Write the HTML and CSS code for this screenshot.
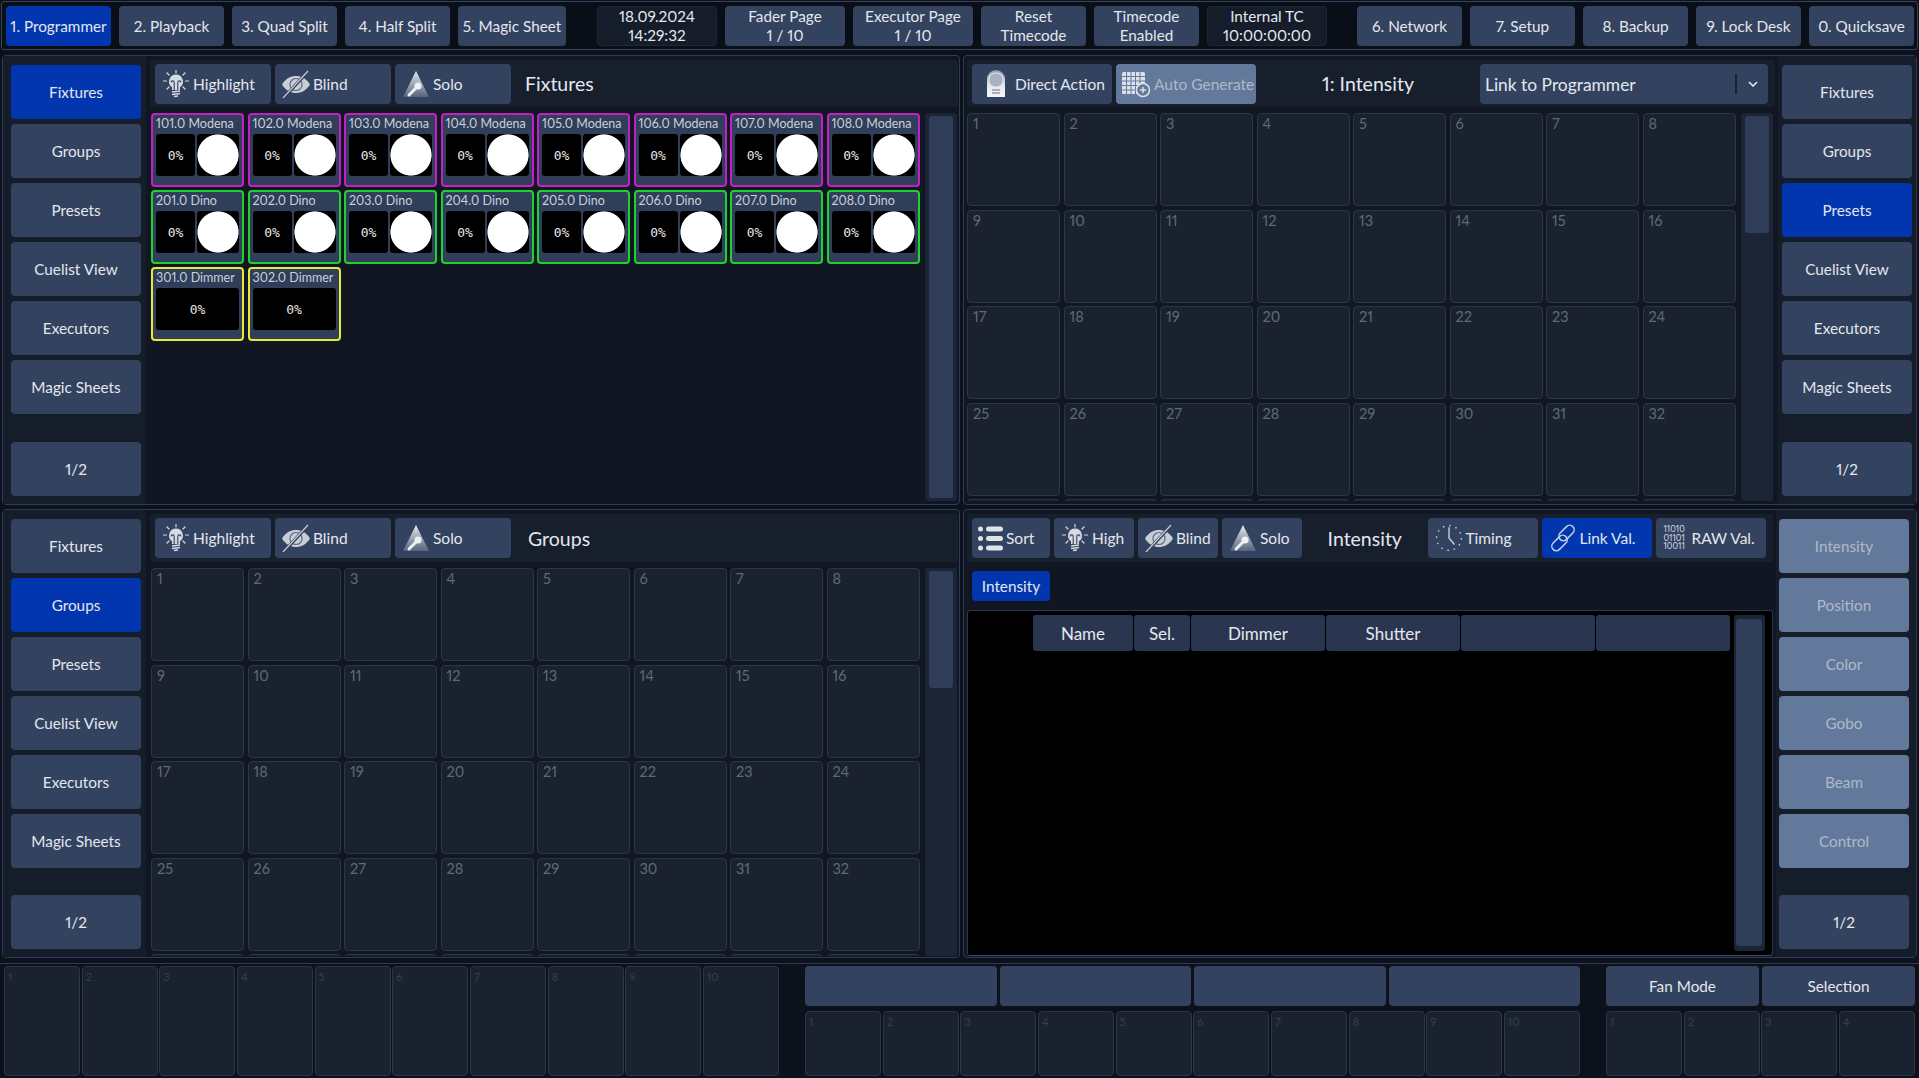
FILE: index.html
```html
<!DOCTYPE html>
<html lang="en">
  <head>
    <meta charset="UTF-8" />
    <title>Programmer</title>
    <link rel="stylesheet" href="styles.css">
  </head>
  <body>
    <svg class="defs" aria-hidden="true">
      <defs>
        <linearGradient id="fade" x1="0" y1="0" x2="0" y2="1">
          <stop offset="0" stop-color="#e8ebf0" />
          <stop offset="1" stop-color="#55637d" />
        </linearGradient>
        <linearGradient id="finger" x1="0" y1="0" x2="0" y2="1">
          <stop offset="0" stop-color="#8f9bad" />
          <stop offset="0.6" stop-color="#e6e9ee" />
          <stop offset="1" stop-color="#f4f5f7" />
        </linearGradient>
        <symbol id="i-bulb" viewBox="0 0 28 28">
          <g stroke="#d5dae3" stroke-width="1.2" stroke-linecap="round">
            <path d="M14 0.500v2.500M5 3l2 2M23 3l-2 2M1.500 11h3M26.500 11h-3M5 19l2-2M23 19l-2-2" />
          </g>
          <path d="M14 4.500a7 7 0 0 1 4 12.700V20h-8v-2.800A7 7 0 0 1 14 4.500z" fill="#d5dae3" />
          <path d="M12.200 20v-7.500a1.600 1.600 0 0 0-3.200 0M15.800 20v-7.500a1.600 1.600 0 0 1 3.200 0" fill="none" stroke="#33425f" stroke-width="1.100" />
          <path d="M10 22l8-1M10 24.500l8-1M12 26.500l4-.5" stroke="#d5dae3" stroke-width="1.400" />
        </symbol>
        <symbol id="i-eye" viewBox="0 0 28 28">
          <path d="M0 14.500C4 8 9 6 14 6s10 2 14 8.500C24 21 19 23 14 23S4 21 0 14.500z" fill="#c8cdd6" />
          <circle cx="14" cy="14.500" r="6" fill="none" stroke="#5c6a84" stroke-width="1.200" />
          <path d="M1.500 28L26.500 1" stroke="#33425f" stroke-width="3.200" />
          <path d="M1 28L26 1" stroke="#c8cdd6" stroke-width="1.200" />
        </symbol>
        <symbol id="i-solo" viewBox="0 0 28 28">
          <path d="M14 1L27 27H1z" fill="url(#fade)" />
          <circle cx="16" cy="16" r="3.500" fill="#eef0f4" />
          <path d="M14 18l-7 7" stroke="#eef0f4" stroke-width="3" stroke-linecap="round" />
        </symbol>
        <symbol id="i-finger" viewBox="0 0 28 28">
          <path d="M5 27V9a9 9 0 0 1 18 0v18z" fill="url(#finger)" />
          <rect x="7" y="3" width="14" height="14" rx="6.500" fill="#a9b2c0" stroke="#e6e9ee" />
          <path d="M10 20h8M10 23h8" stroke="#667089" stroke-width="1" />
        </symbol>
        <symbol id="i-grid" viewBox="0 0 30 28">
          <rect x="1" y="2" width="23" height="22" rx="1.500" fill="#dde1e8" />
          <path d="M1 6.500h23M1 11h23M1 15.500h23M1 20h23M5.500 2v22M10 2v22M14.500 2v22M19 2v22" stroke="#63799b" stroke-width="1" />
          <circle cx="22" cy="20" r="6.500" fill="#63799b" stroke="#dde1e8" stroke-width="1.500" />
          <path d="M19 20h6M22 17v6" stroke="#dde1e8" stroke-width="1.500" />
        </symbol>
        <symbol id="i-sort" viewBox="0 0 26 25">
          <g fill="#dfe3ea">
            <circle cx="2.500" cy="3" r="2.500" />
            <circle cx="2.500" cy="12.500" r="2.500" />
            <circle cx="2.500" cy="22" r="2.500" />
            <rect x="8" y="0.500" width="17" height="5" rx="2.500" />
            <rect x="8" y="10" width="17" height="5" rx="2.500" />
            <rect x="8" y="19.500" width="17" height="5" rx="2.500" />
          </g>
        </symbol>
        <symbol id="i-clock" viewBox="0 0 26 26">
          <circle cx="13" cy="13" r="11.500" fill="none" stroke="#c8cdd6" stroke-width="1.300" stroke-dasharray="1.500 4.500" />
          <path d="M13 3v10l5 6" fill="none" stroke="#c8cdd6" stroke-width="1.300" />
        </symbol>
        <symbol id="i-link" viewBox="0 0 28 28">
          <g fill="none" stroke="#c4d0e8" stroke-width="1.500">
            <rect x="13" y="0" width="9" height="18" rx="4.500" transform="rotate(45 17.500 9)" />
            <rect x="6" y="10" width="9" height="18" rx="4.500" transform="rotate(45 10.500 19)" />
          </g>
        </symbol>
      </defs>
    </svg>

    <div class="topbar">
      <a class="btn top active">1. Programmer</a>
      <a class="btn top">2. Playback</a>
      <a class="btn top">3. Quad Split</a>
      <a class="btn top">4. Half Split</a>
      <a class="btn top magic">5. Magic Sheet</a>
      <div class="clock date">18.09.2024<br />14:29:32</div>
      <a class="btn two w120">Fader Page<br />1 / 10</a>
      <a class="btn two w120">Executor Page<br />1 / 10</a>
      <a class="btn two">Reset<br />Timecode</a>
      <a class="btn two">Timecode<br />Enabled</a>
      <div class="clock tc">Internal TC<br />10:00:00:00</div>
      <a class="btn top">6. Network</a>
      <a class="btn top">7. Setup</a>
      <a class="btn top">8. Backup</a>
      <a class="btn top">9. Lock Desk</a>
      <a class="btn top">0. Quicksave</a>
    </div>

    <div class="row row-up">
      <section class="panel left">
        <nav class="nav">
          <a class="btn active">Fixtures</a>
          <a class="btn">Groups</a>
          <a class="btn">Presets</a>
          <a class="btn">Cuelist View</a>
          <a class="btn">Executors</a>
          <a class="btn">Magic Sheets</a>
          <a class="btn page">1/2</a>
        </nav>
        <div class="main">
          <div class="toolbar">
            <a class="btn tool w116"><svg class="icon"><use href="#i-bulb" /></svg>Highlight</a>
            <a class="btn tool w116"><svg class="icon"><use href="#i-eye" /></svg>Blind</a>
            <a class="btn tool w116"><svg class="icon"><use href="#i-solo" /></svg>Solo</a>
            <h2 class="title">Fixtures</h2>
          </div>
          <div class="view">
            <div class="tiles">
              <div class="tile pink"><span>101.0 Modena</span><div class="vals"><b>0%</b><i></i></div></div>
              <div class="tile pink"><span>102.0 Modena</span><div class="vals"><b>0%</b><i></i></div></div>
              <div class="tile pink"><span>103.0 Modena</span><div class="vals"><b>0%</b><i></i></div></div>
              <div class="tile pink"><span>104.0 Modena</span><div class="vals"><b>0%</b><i></i></div></div>
              <div class="tile pink"><span>105.0 Modena</span><div class="vals"><b>0%</b><i></i></div></div>
              <div class="tile pink"><span>106.0 Modena</span><div class="vals"><b>0%</b><i></i></div></div>
              <div class="tile pink"><span>107.0 Modena</span><div class="vals"><b>0%</b><i></i></div></div>
              <div class="tile pink"><span>108.0 Modena</span><div class="vals"><b>0%</b><i></i></div></div>
              <div class="tile green"><span>201.0 Dino</span><div class="vals"><b>0%</b><i></i></div></div>
              <div class="tile green"><span>202.0 Dino</span><div class="vals"><b>0%</b><i></i></div></div>
              <div class="tile green"><span>203.0 Dino</span><div class="vals"><b>0%</b><i></i></div></div>
              <div class="tile green"><span>204.0 Dino</span><div class="vals"><b>0%</b><i></i></div></div>
              <div class="tile green"><span>205.0 Dino</span><div class="vals"><b>0%</b><i></i></div></div>
              <div class="tile green"><span>206.0 Dino</span><div class="vals"><b>0%</b><i></i></div></div>
              <div class="tile green"><span>207.0 Dino</span><div class="vals"><b>0%</b><i></i></div></div>
              <div class="tile green"><span>208.0 Dino</span><div class="vals"><b>0%</b><i></i></div></div>
              <div class="tile yellow"><span>301.0 Dimmer</span><div class="vals"><b>0%</b></div></div>
              <div class="tile yellow"><span>302.0 Dimmer</span><div class="vals"><b>0%</b></div></div>
            </div>
            <div class="scroll"><div class="thumb full"></div></div>
          </div>
        </div>
      </section>

      <section class="panel right">
        <div class="main">
          <div class="toolbar">
            <a class="btn tool direct"><svg class="icon"><use href="#i-finger" /></svg>Direct Action</a>
            <a class="btn tool auto dim"><svg class="icon wide"><use href="#i-grid" /></svg>Auto Generate</a>
            <h2 class="title title-mid">1: Intensity</h2>
            <div class="select"><span class="select-text">Link to Programmer</span><span class="sep"></span><svg class="chev" viewBox="0 0 10 6"><path d="M1 1l4 4 4-4" fill="none" stroke="#e3e7ee" stroke-width="1.600" /></svg></div>
          </div>
          <div class="view">
            <div class="cells">
              <div class="cell">1</div><div class="cell">2</div><div class="cell">3</div><div class="cell">4</div><div class="cell">5</div><div class="cell">6</div><div class="cell">7</div><div class="cell">8</div>
              <div class="cell">9</div><div class="cell">10</div><div class="cell">11</div><div class="cell">12</div><div class="cell">13</div><div class="cell">14</div><div class="cell">15</div><div class="cell">16</div>
              <div class="cell">17</div><div class="cell">18</div><div class="cell">19</div><div class="cell">20</div><div class="cell">21</div><div class="cell">22</div><div class="cell">23</div><div class="cell">24</div>
              <div class="cell">25</div><div class="cell">26</div><div class="cell">27</div><div class="cell">28</div><div class="cell">29</div><div class="cell">30</div><div class="cell">31</div><div class="cell">32</div>
              <div class="cell"></div><div class="cell"></div><div class="cell"></div><div class="cell"></div><div class="cell"></div><div class="cell"></div><div class="cell"></div><div class="cell"></div>
            </div>
            <div class="scroll"><div class="thumb"></div></div>
          </div>
        </div>
        <nav class="nav">
          <a class="btn">Fixtures</a>
          <a class="btn">Groups</a>
          <a class="btn active">Presets</a>
          <a class="btn">Cuelist View</a>
          <a class="btn">Executors</a>
          <a class="btn">Magic Sheets</a>
          <a class="btn page">1/2</a>
        </nav>
      </section>
    </div>

    <div class="row row-low">
      <section class="panel left">
        <nav class="nav">
          <a class="btn">Fixtures</a>
          <a class="btn active">Groups</a>
          <a class="btn">Presets</a>
          <a class="btn">Cuelist View</a>
          <a class="btn">Executors</a>
          <a class="btn">Magic Sheets</a>
          <a class="btn page">1/2</a>
        </nav>
        <div class="main">
          <div class="toolbar">
            <a class="btn tool w116"><svg class="icon"><use href="#i-bulb" /></svg>Highlight</a>
            <a class="btn tool w116"><svg class="icon"><use href="#i-eye" /></svg>Blind</a>
            <a class="btn tool w116"><svg class="icon"><use href="#i-solo" /></svg>Solo</a>
            <h2 class="title title-groups">Groups</h2>
          </div>
          <div class="view">
            <div class="cells">
              <div class="cell">1</div><div class="cell">2</div><div class="cell">3</div><div class="cell">4</div><div class="cell">5</div><div class="cell">6</div><div class="cell">7</div><div class="cell">8</div>
              <div class="cell">9</div><div class="cell">10</div><div class="cell">11</div><div class="cell">12</div><div class="cell">13</div><div class="cell">14</div><div class="cell">15</div><div class="cell">16</div>
              <div class="cell">17</div><div class="cell">18</div><div class="cell">19</div><div class="cell">20</div><div class="cell">21</div><div class="cell">22</div><div class="cell">23</div><div class="cell">24</div>
              <div class="cell">25</div><div class="cell">26</div><div class="cell">27</div><div class="cell">28</div><div class="cell">29</div><div class="cell">30</div><div class="cell">31</div><div class="cell">32</div>
              <div class="cell"></div><div class="cell"></div><div class="cell"></div><div class="cell"></div><div class="cell"></div><div class="cell"></div><div class="cell"></div><div class="cell"></div>
            </div>
            <div class="scroll"><div class="thumb"></div></div>
          </div>
        </div>
      </section>

      <section class="panel right sheet">
        <div class="main">
          <div class="toolbar tight">
            <a class="btn tool w78 sort"><svg class="icon sm"><use href="#i-sort" /></svg>Sort</a>
            <a class="btn tool w80"><svg class="icon"><use href="#i-bulb" /></svg>High</a>
            <a class="btn tool w80"><svg class="icon"><use href="#i-eye" /></svg>Blind</a>
            <a class="btn tool w80"><svg class="icon"><use href="#i-solo" /></svg>Solo</a>
            <h2 class="title title-sheet">Intensity</h2>
            <a class="btn tool w110"><svg class="icon"><use href="#i-clock" /></svg>Timing</a>
            <a class="btn tool w110 active"><svg class="icon"><use href="#i-link" /></svg>Link Val.</a>
            <a class="btn tool w110"><span class="bits">11010<br />01101<br />10011</span>RAW Val.</a>
          </div>
          <div class="chips"><a class="btn chip active">Intensity</a></div>
          <div class="table">
            <div class="heads">
              <div class="head w100">Name</div>
              <div class="head w56">Sel.</div>
              <div class="head w134">Dimmer</div>
              <div class="head w134">Shutter</div>
              <div class="head w134"></div>
              <div class="head w134"></div>
            </div>
            <div class="scroll"><div class="thumb full"></div></div>
          </div>
        </div>
        <nav class="nav">
          <a class="btn grey">Intensity</a>
          <a class="btn grey">Position</a>
          <a class="btn grey">Color</a>
          <a class="btn grey">Gobo</a>
          <a class="btn grey">Beam</a>
          <a class="btn grey">Control</a>
          <a class="btn page">1/2</a>
        </nav>
      </section>
    </div>

    <div class="strip">
      <div class="faders">
        <div class="cell tiny">1</div><div class="cell tiny">2</div><div class="cell tiny">3</div><div class="cell tiny">4</div><div class="cell tiny">5</div>
        <div class="cell tiny">6</div><div class="cell tiny">7</div><div class="cell tiny">8</div><div class="cell tiny">9</div><div class="cell tiny">10</div>
      </div>
      <div class="bank">
        <div class="bank-btns">
          <a class="btn"></a><a class="btn"></a><a class="btn"></a><a class="btn"></a>
        </div>
        <div class="bank-cells">
          <div class="cell tiny">1</div><div class="cell tiny">2</div><div class="cell tiny">3</div><div class="cell tiny">4</div><div class="cell tiny">5</div>
          <div class="cell tiny">6</div><div class="cell tiny">7</div><div class="cell tiny">8</div><div class="cell tiny">9</div><div class="cell tiny">10</div>
        </div>
      </div>
      <div class="bank fan">
        <div class="bank-btns">
          <a class="btn">Fan Mode</a><a class="btn">Selection</a>
        </div>
        <div class="bank-cells">
          <div class="cell tiny">1</div><div class="cell tiny">2</div><div class="cell tiny">3</div><div class="cell tiny">4</div>
        </div>
      </div>
    </div>
  </body>
</html>
```

FILE: styles.css
```css
* {
  box-sizing: border-box;
}
body {
  width: 1919px;
  height: 1078px;
  margin: 0;
  overflow: hidden;
  background: #0c111b;
  color: #e3e7ee;
  font-family: Lato, sans-serif;
  font-size: 15.3px;
  font-variant-numeric: proportional-nums;
}
.defs {
  position: absolute;
  width: 0;
  height: 0;
}

/* buttons */
.btn {
  display: flex;
  align-items: center;
  justify-content: center;
  background: #33425f;
  border-radius: 4px;
  color: #e3e7ee;
  text-align: center;
  white-space: nowrap;
}
.btn.active {
  background: #0236ae;
}
.btn.grey {
  background: #63799b;
  color: #aeb9ca;
}
.btn.dim {
  background: #63799b;
  color: #aeb9ca;
}
.tool {
  justify-content: flex-start;
  height: 40px;
  padding-left: 7px;
  gap: 3px;
  font-size: 15.500px;
}
.icon {
  width: 28px;
  height: 28px;
  flex: none;
}
.icon.wide {
  width: 30px;
}
.icon.sm {
  width: 26px;
  height: 25px;
}
.w78 { width: 78px; }
.w80 { width: 80px; }
.w110 { width: 110px; }
.w116 { width: 116px; }
.sort { padding-left: 6px; gap: 2px; }

/* top bar */
.topbar {
  display: flex;
  align-items: center;
  width: 1917px;
  height: 49px;
  margin: 1px 0 0 1px;
  padding-left: 4px;
  gap: 8px;
  border: 1px solid #34435f;
  border-radius: 3px;
  background: #0a0e17;
}
.top {
  width: 105px;
  height: 40px;
}
.top.magic {
  width: 108px;
}
.two {
  flex-direction: column;
  width: 105px;
  height: 40px;
  line-height: 19px;
}
.two.w120 {
  width: 120px;
}
.clock {
  height: 40px;
  background: #161d2a;
  border: 1px solid #1f2735;
  border-radius: 4px;
  text-align: center;
  line-height: 19px;
  padding-top: 0;
}
.date {
  width: 120px;
  margin-left: 23px;
}
.tc {
  width: 120px;
  margin-right: 22px;
}

/* panels */
.row {
  display: flex;
  gap: 3px;
  margin: 4px 0 0 2px;
  height: 449px;
}
.row-up {
  margin-top: 5px;
  height: 450px;
}
.panel {
  display: flex;
  height: 100%;
  border: 1px solid #2e3b55;
  border-radius: 4px;
  background: #111722;
}
.panel.left {
  width: 958px;
}
.panel.right {
  width: 954px;
}
.nav {
  display: flex;
  flex-direction: column;
  flex: none;
  gap: 5px;
  padding: 9px 5px 8px 8px;
  width: 143px;
  background: #161d2a;
}
.right .nav {
  width: 138px;
  padding-left: 4px;
  margin-left: 2px;
}
.sheet .nav {
  padding-left: 3px;
  margin-left: 0;
  width: 140px;
}
.nav .btn {
  width: 130px;
  height: 54px;
  flex: none;
}
.nav .page {
  margin-top: auto;
}
.main {
  display: flex;
  flex-direction: column;
  flex: 1;
  min-width: 0;
  padding: 4px 0 3px 4px;
}
.right .main {
  padding-left: 3px;
}
.row-low .main {
  padding-bottom: 1px;
}
.toolbar {
  display: flex;
  flex: none;
  align-items: center;
  gap: 4px;
  height: 47px;
  padding: 0 5px;
  margin-right: 1px;
  background: #181f2c;
  border-radius: 3px;
}
.row-low .toolbar {
  height: 48px;
}
.title {
  margin: 0 0 0 10px;
  font-size: 19.500px;
  font-weight: 400;
}
.title-groups {
  margin-left: 13px;
}
.title-mid {
  width: 216px;
  margin-left: 0;
  text-align: center;
}
.title-sheet {
  width: 117.500px;
  margin: 0;
  text-align: center;
}
.direct {
  width: 140px;
  padding-left: 10px;
  gap: 5px;
}
.auto {
  width: 140px;
  padding-left: 5px;
  gap: 3px;
}
.select {
  display: flex;
  align-items: center;
  width: 288px;
  height: 40px;
  padding-left: 5px;
  background: #33425f;
  border-radius: 4px;
  font-size: 17.400px;
}
.select-text {
  padding-top: 2px;
}
.sep {
  width: 2px;
  height: 20px;
  margin-left: auto;
  background: #1a2230;
}
.chev {
  width: 10px;
  height: 6px;
  margin: 0 10px 0 11px;
}
.view {
  display: flex;
  flex: 1;
  min-height: 0;
  gap: 5px;
  margin-top: 6px;
  overflow: hidden;
}
.left .view {
  padding-left: 1px;
}
.scroll {
  width: 32px;
  flex: none;
  padding: 3px 4px;
  background: #1c2535;
  border-radius: 3px;
}
.thumb {
  height: 117px;
  background: #2f3d59;
  border-radius: 3px;
}
.thumb.full {
  height: 100%;
}

/* fixtures */
.tiles {
  display: grid;
  grid-template-columns: repeat(8, 93px);
  grid-auto-rows: 74px;
  gap: 3px 3.5px;
  width: 769px;
  flex: none;
}
.tile {
  border: 2px solid;
  border-radius: 4px;
  background: #303e5a;
  padding: 0 3px;
}
.tile span {
  display: block;
  height: 19px;
  font-size: 12.500px;
  line-height: 18px;
  color: #c9d0db;
  white-space: nowrap;
}
.pink { border-color: #c21fc4; }
.green { border-color: #1fd02f; }
.yellow { border-color: #e8e83a; }
.vals {
  display: flex;
  gap: 2px;
  height: 42px;
}
.vals b {
  flex: 1;
  display: flex;
  align-items: center;
  justify-content: center;
  background: #000;
  border-radius: 3px;
  color: #e8e8e8;
  font-family: "DejaVu Sans Mono", monospace;
  font-size: 13px;
  font-weight: 400;
}
.vals i {
  width: 42px;
  flex: none;
  background: radial-gradient(circle closest-side, #fff 96%, #000 100%);
  border-radius: 3px;
}

/* preset cells */
.cells {
  display: grid;
  grid-template-columns: repeat(8, 93px);
  grid-auto-rows: 93px;
  gap: 3.5px;
  width: 769px;
  flex: none;
}
.cell {
  padding: 1px 5px 0;
  background: #1a2230;
  border: 1px solid #2b3648;
  border-radius: 4px;
  color: #5f6979;
  font-size: 14.500px;
}
.cell.tiny {
  padding: 3px 3px;
  font-size: 11px;
  color: #333f54;
}

/* value sheet */
.chips {
  flex: none;
  height: 48px;
  padding: 9px 0 0 5px;
}
.chip {
  width: 78px;
  height: 30px;
}
.tight {
  gap: 4px;
  margin-right: 3px;
}
.bits {
  width: 25px;
  flex: none;
  margin-left: 1px;
  font-size: 8.500px;
  line-height: 8.500px;
  text-align: left;
  color: #d5dae3;
}
.table {
  display: flex;
  flex: 1;
  min-height: 0;
  justify-content: space-between;
  margin-right: 3px;
  padding: 4px 7px 4px 65px;
  background: #000;
  border: 1px solid #2b3648;
  border-bottom-color: #3a4a68;
  border-radius: 3px;
}
.heads {
  display: flex;
  gap: 1px;
  height: 36px;
}
.head {
  display: flex;
  align-items: center;
  justify-content: center;
  background: #2a3650;
  border-radius: 3px;
  font-size: 17px;
}
.w100 { width: 100px; }
.w56 { width: 56px; }
.w134 { width: 134px; }
.table .scroll {
  width: 31px;
  padding: 4px 3px 5px 2px;
}

/* bottom strip */
.strip {
  display: flex;
  gap: 26px;
  height: 115px;
  margin-top: 5px;
  padding: 2px 0 0 4px;
  border-top: 1px solid #2e3b55;
}
.faders {
  display: grid;
  grid-template-columns: repeat(10, 1fr);
  gap: 1.500px;
  width: 775px;
  height: 110px;
}
.bank {
  display: flex;
  flex-direction: column;
  gap: 5px;
  width: 775px;
  height: 110px;
}
.bank.fan {
  width: 309px;
}
.bank-btns {
  display: grid;
  grid-auto-flow: column;
  grid-auto-columns: 1fr;
  gap: 3px;
  height: 40px;
}
.bank-cells {
  display: grid;
  grid-auto-flow: column;
  grid-auto-columns: 1fr;
  gap: 1.500px;
  height: 65px;
}
```
